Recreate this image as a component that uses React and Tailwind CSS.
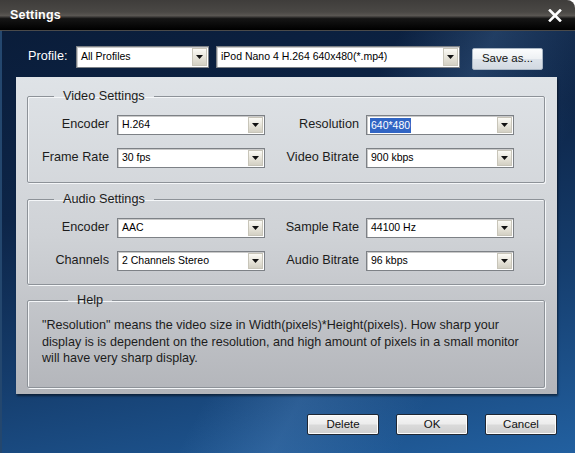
import React from "react";

function Arrow() {
  return (
    <svg width="7" height="4" viewBox="0 0 7 4">
      <path d="M0 0h7L3.5 4z" fill="#111" />
    </svg>
  );
}

function Select({ value, className, selected }) {
  return (
    <div className={`flex items-stretch bg-white border border-[#7d8186] shadow-[inset_1px_1px_0_#c9c9c9] p-[1px] ${className}`}>
      <div className="flex-1 flex items-center pl-[2px] text-[10.5px] text-black whitespace-nowrap overflow-hidden">
        {selected ? (
          <span className="bg-[#3165c4] text-white px-[1px] leading-[15px]">{value}</span>
        ) : (
          <span className="pl-[1px]">{value}</span>
        )}
      </div>
      <div className="w-[15px] flex items-center justify-center border border-[#c8c5b9] bg-[linear-gradient(#fbfaf5,#e4e1d6_60%,#d3d0c4)]">
        <Arrow />
      </div>
    </div>
  );
}

function Row({ left, leftValue, right, rightValue, rightSelected }) {
  return (
    <div className="flex items-center h-[20px]">
      <div className="w-[81px] text-right text-[12.7px] text-[#1c1c1c]">{left}</div>
      <Select value={leftValue} className="ml-[8px] w-[148px] h-[20px]" />
      <div className="ml-[8px] w-[86px] text-right text-[12.7px] text-[#1c1c1c]">{right}</div>
      <Select value={rightValue} selected={rightSelected} className="ml-[7px] w-[148px] h-[20px]" />
    </div>
  );
}

function Group({ title, children, className }) {
  return (
    <fieldset className={`border border-[#8d9298] rounded-[2px] shadow-[inset_1px_1px_0_#f4f6f8,1px_1px_0_#f4f6f8] ${className}`}>
      <legend className="ml-[26px] px-[9px] text-[12.7px] leading-[16px] text-[#1c1c1c]">{title}</legend>
      {children}
    </fieldset>
  );
}

function Btn({ children, className }) {
  return (
    <button className={`h-[21px] w-[72px] rounded-[2px] border border-[#1f2733] bg-[linear-gradient(#f6f6f6_0%,#ececec_48%,#dadada_52%,#cfcfcf_100%)] shadow-[inset_0_0_0_1px_#fcfcfc] text-[11.5px] text-[#111] ${className}`}>
      {children}
    </button>
  );
}

export default function App() {
  return (
    <div className="w-[575px] h-[453px] overflow-hidden flex flex-col font-['Liberation_Sans',Arial,sans-serif]">
      {/* title bar */}
      <div className="h-[31px] shrink-0 flex items-center justify-between pl-[10px] pr-[13px] rounded-tr-[8px] border-b border-[#4a4a4a] bg-[linear-gradient(#3f3d3b_0%,#4a4845_40%,#5a5753_52%,#151515_62%,#000_100%)]">
        <span className="text-white font-bold text-[12.5px] tracking-[0.2px]">Settings</span>
        <svg width="14" height="13" viewBox="0 0 14 13">
          <path d="M2 1.5l10 10M12 1.5l-10 10" stroke="#fff" strokeWidth="2.6" strokeLinecap="square" />
        </svg>
      </div>

      {/* body */}
      <div className="flex-1 flex flex-col pl-[14px] pr-[18px] pt-[14px] border-l-2 border-[#24476e] bg-[linear-gradient(118deg,transparent_50%,rgba(110,160,215,0.22)_62%,transparent_78%),linear-gradient(168deg,#0a1d3a_0%,#0d2548_35%,#153d6d_65%,#2260a0_100%)]">
        <div className="flex items-center pl-[12px] h-[22px] mt-[1px]">
          <span className="w-[48px] text-white text-[12.7px]">Profile:</span>
          <Select value="All Profiles" className="w-[133px] h-[22px]" />
          <Select value="iPod Nano 4 H.264 640x480(*.mp4)" className="ml-[7px] w-[244px] h-[22px]" />
          <button className="ml-[12px] mt-[3px] w-[71px] h-[22px] rounded-[2px] border border-[#a9b6c4] bg-[linear-gradient(#fbfcfd_0%,#eef1f4_48%,#dde3ea_52%,#d2d9e1_100%)] text-[11.5px] text-[#111]">
            Save as...
          </button>
        </div>

        {/* main panel */}
        <div className="mt-[9px] w-[541px] h-[317px] pl-[11px] pr-[12px] pt-[11px] bg-[linear-gradient(#dfe3e7_0%,#cfd2d6_50%,#b3b5ba_100%)] shadow-[1px_2px_2px_rgba(0,0,0,0.5)]">
          <Group title="Video Settings" className="pt-[11px] pb-[14px]">
            <div className="flex flex-col gap-[13px]">
              <Row left="Encoder" leftValue="H.264" right="Resolution" rightValue="640*480" rightSelected />
              <Row left="Frame Rate" leftValue="30 fps" right="Video Bitrate" rightValue="900 kbps" />
            </div>
          </Group>
          <Group title="Audio Settings" className="mt-[8px] pt-[11px] pb-[13px]">
            <div className="flex flex-col gap-[13px]">
              <Row left="Encoder" leftValue="AAC" right="Sample Rate" rightValue="44100 Hz" />
              <Row left="Channels" leftValue="2 Channels Stereo" right="Audio Bitrate" rightValue="96 kbps" />
            </div>
          </Group>
          <Group title="Help" className="mt-[7px] pt-[9px] pb-[20px] pl-[14px]">
            <p className="text-[12.6px] leading-[16.5px] text-[#1c1c1c]">
              "Resolution" means the video size in Width(pixels)*Height(pixels). How sharp your
              <br />
              display is is dependent on the resolution, and high amount of pixels in a small monitor
              <br />
              will have very sharp display.
            </p>
          </Group>
        </div>

        <div className="mt-[20px] flex justify-end gap-[17px]">
          <Btn>Delete</Btn>
          <Btn className="w-[71px]">OK</Btn>
          <Btn>Cancel</Btn>
        </div>
      </div>
    </div>
  );
}
